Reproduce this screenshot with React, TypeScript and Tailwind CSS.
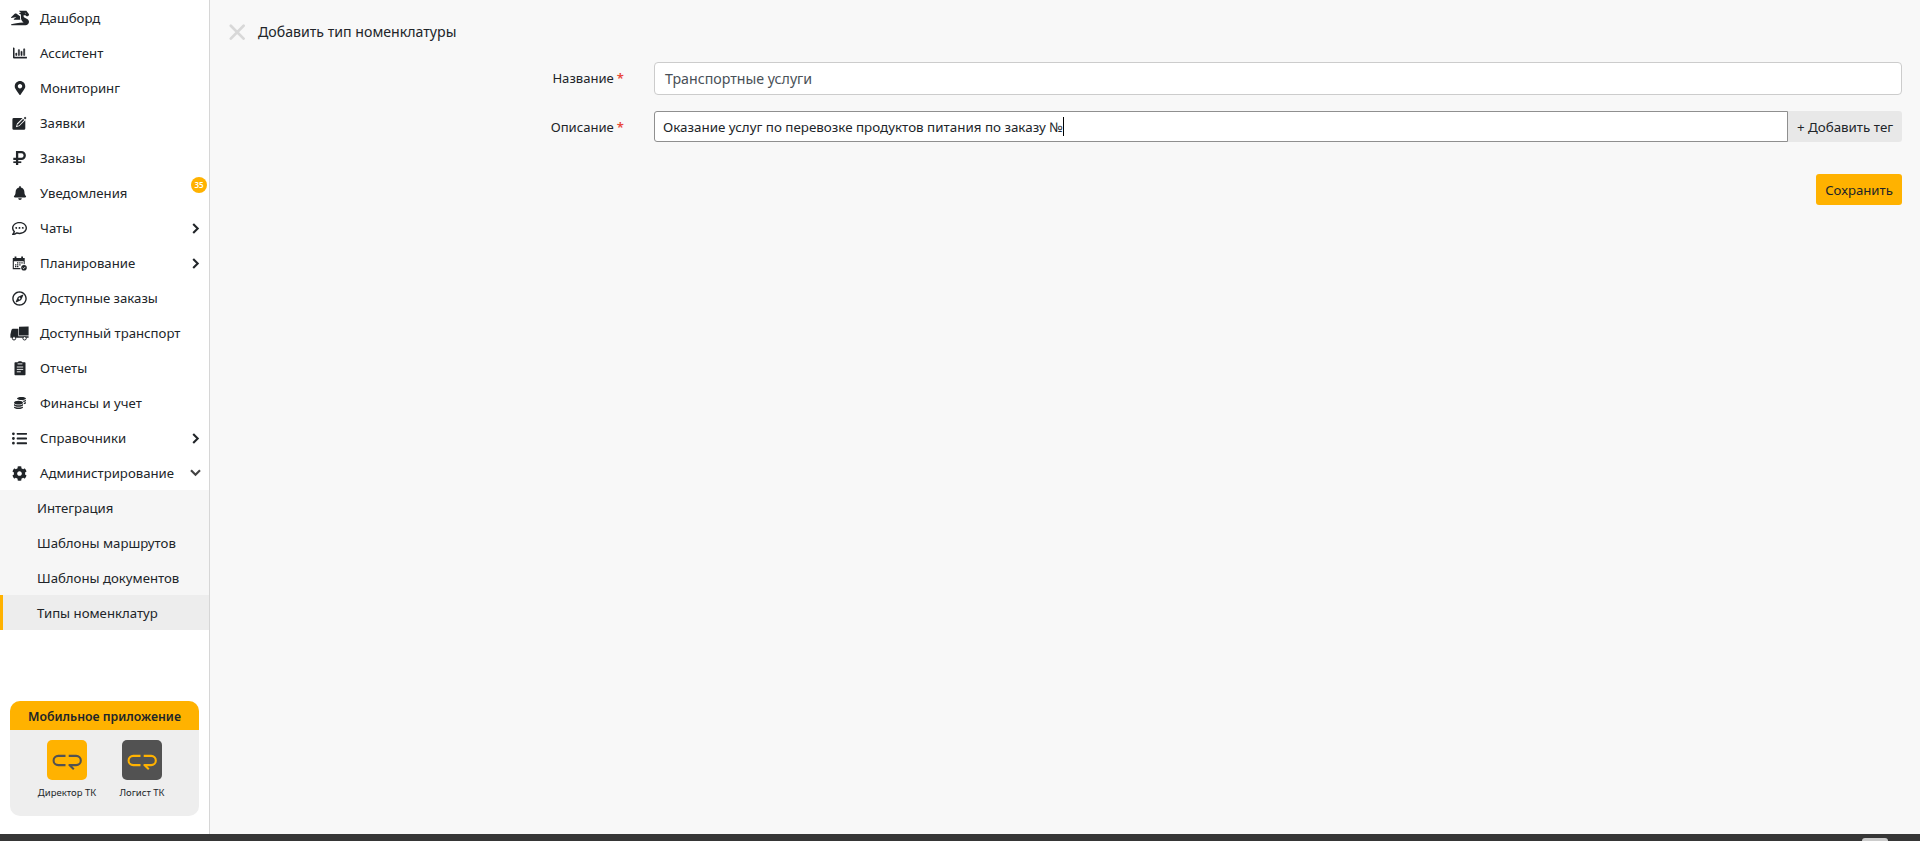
import React from 'react';
import type { ReactNode } from 'react';
import {
  FaBell,
  FaCog,
  FaCoins,
  FaDragon,
  FaListUl,
  FaMapMarkerAlt,
  FaRegChartBar,
  FaRegCommentDots,
  FaRegCompass,
} from 'react-icons/fa';

function EditIcon() {
  return (
    <svg width="15" height="15" viewBox="0 0 15 15">
      <path d="M1.8 2h8.8L5 7.6 3.9 11.2l3.6-1.1 5.8-5.8v8.1a1.4 1.4 0 0 1-1.4 1.4H1.8A1.4 1.4 0 0 1 .4 12.4v-9A1.4 1.4 0 0 1 1.8 2z" fill="currentColor" />
      <path d="m5.8 8.2 5.3-5.3 1.2 1.2L7 9.4l-1.8.6z" fill="currentColor" />
      <path d="m11.8 2.1 1.3-1.3 1.3 1.3-1.3 1.3z" fill="currentColor" />
    </svg>
  );
}

function RubleIcon() {
  return (
    <svg width="13" height="14" viewBox="0 0 13 14" fill="none" stroke="currentColor" strokeWidth="2.3">
      <path d="M4.1 14V1.2h4.3a3.3 3.3 0 0 1 0 6.7H.3" />
      <path d="M.3 11.2h8" strokeWidth="1.7" />
    </svg>
  );
}

function CalendarIcon() {
  return (
    <svg width="15" height="15" viewBox="0 0 15 15" fill="currentColor">
      <path d="M.8 2h1.8V.6h1.8V2h4.8V.6H11V2h1.7v3.2H.8z" />
      <path d="M1.3 5v7.6h7.1" fill="none" stroke="currentColor" strokeWidth="1.1" />
      <path d="M12.2 5v3.2" stroke="currentColor" strokeWidth="1" />
      <path d="M5 6.2h1.4v1.3H5zM7.2 6.2h1.4v1.3H7.2zM9.3 6.2h1.4v1.3H9.3zM3 8.2h1.4v1.2H3zM5 8.2h1.4v1.2H5zM7.2 8.2h1.4v1.2H7.2zM3 10h1.4v1.2H3zM5 10h1.4v1.2H5z" />
      <circle cx="12" cy="11.8" r="2.8" />
      <path d="m10.7 11.8.9.9 1.7-1.8" fill="none" stroke="#fff" strokeWidth=".8" />
    </svg>
  );
}

function TruckIcon() {
  return (
    <svg width="19" height="15" viewBox="0 0 19 15" fill="currentColor">
      <path d="M9 .7 18.6.4v9.1H9z" />
      <path d="M2.6 2.8h5.8v7.4h10.2v1.6H.4V8.6L1.5 3.8z" />
      <circle cx="4" cy="12.3" r="1.7" fill="#fff" stroke="currentColor" strokeWidth="1" />
      <circle cx="14.6" cy="12.3" r="1.7" fill="#fff" stroke="currentColor" strokeWidth="1" />
    </svg>
  );
}

function ReportIcon() {
  return (
    <svg width="12" height="15" viewBox="0 0 12 15">
      <path d="M1.2 1.3h2.5C4 .5 4.8.2 6 .2s2 .3 2.3 1.1h2.5c.4 0 .7.3.7.7v11.6c0 .4-.3.7-.7.7H1.2a.7.7 0 0 1-.7-.7V2c0-.4.3-.7.7-.7z" fill="currentColor" />
      <path d="M3.6 2.9h4.8M2.8 6h6.4M2.8 8.4h6.4M2.8 10.8h4" stroke="#fff" strokeWidth=".9" />
    </svg>
  );
}

function Chevron({ down }: { down?: boolean }) {
  return down ? (
    <svg width="11" height="8" viewBox="0 0 11 8" fill="none">
      <path d="m1 1.2 4.5 4.5L10 1.2" stroke="currentColor" strokeWidth="2.2" />
    </svg>
  ) : (
    <svg width="8" height="11" viewBox="0 0 8 11" fill="none">
      <path d="m1.2 1 4.5 4.5L1.2 10" stroke="currentColor" strokeWidth="2.1" />
    </svg>
  );
}

type Item = { label: string; icon: ReactNode; arrow?: 'right' | 'down'; badge?: string };

const items: Item[] = [
  { label: 'Дашборд', icon: <FaDragon size={18} /> },
  { label: 'Ассистент', icon: <FaRegChartBar size={14} stroke="currentColor" strokeWidth={14} /> },
  { label: 'Мониторинг', icon: <FaMapMarkerAlt size={14} /> },
  { label: 'Заявки', icon: <EditIcon /> },
  { label: 'Заказы', icon: <RubleIcon /> },
  { label: 'Уведомления', icon: <FaBell size={14} />, badge: '35' },
  { label: 'Чаты', icon: <FaRegCommentDots size={15} />, arrow: 'right' },
  { label: 'Планирование', icon: <CalendarIcon />, arrow: 'right' },
  { label: 'Доступные заказы', icon: <FaRegCompass size={15} /> },
  { label: 'Доступный транспорт', icon: <TruckIcon /> },
  { label: 'Отчеты', icon: <ReportIcon /> },
  { label: 'Финансы и учет', icon: <FaCoins size={12} /> },
  { label: 'Справочники', icon: <FaListUl size={15} />, arrow: 'right' },
  { label: 'Администрирование', icon: <FaCog size={15} />, arrow: 'down' },
];

const subItems = ['Интеграция', 'Шаблоны маршрутов', 'Шаблоны документов', 'Типы номенклатур'];

function AppTile({ label, dark }: { label: string; dark?: boolean }) {
  return (
    <div className="flex w-[75px] flex-col items-center">
      <div className={dark ? 'flex h-10 w-10 items-center justify-center rounded-[5px] bg-[#525252] pt-[3px] text-[#ffb200]' : 'flex h-10 w-10 items-center justify-center rounded-[5px] bg-[#ffb200] pt-[3px] text-[#525252]'}>
        <svg width="30" height="16" viewBox="0 0 30 16" fill="none" stroke="currentColor" strokeWidth="2.1" strokeLinejoin="round">
          <path d="M13.5 1.9H6.2a4.6 4.6 0 0 0 0 9.2h7.3" />
          <path d="M16.7 1.9h7.5a4.6 4.6 0 0 1 0 9.2h-6.8l4.4 4.1" />
        </svg>
      </div>
      <span className="mt-[6px] whitespace-nowrap text-[9.5px] leading-[14px]">{label}</span>
    </div>
  );
}

function Label({ text }: { text: string }) {
  return (
    <div className="w-[414px] shrink-0 text-right text-[13.1px]">
      {text}
      <span className="ml-[3px] font-semibold text-[#e8483c]">*</span>
    </div>
  );
}

export default function App() {
  return (
    <div className="flex h-[841px] w-[1920px] flex-col overflow-hidden bg-[#f8f8f8] font-['Noto_Sans',sans-serif] text-[13.2px] leading-5 text-[#212529]">
      <div className="flex h-[834px]">
        <aside className="flex w-[210px] shrink-0 flex-col border-r border-[#d6d6d6] bg-white">
          <nav>
            {items.map((item) => (
              <div key={item.label} className="relative flex h-[35px] items-center pt-px">
                <span className="flex w-[39px] shrink-0 justify-center">{item.icon}</span>
                <span className="ml-px whitespace-nowrap">{item.label}</span>
                {item.arrow && (
                  <span className={item.arrow === 'down' ? 'ml-auto mr-2 text-[#444]' : 'ml-auto mr-[9px]'}>
                    <Chevron down={item.arrow === 'down'} />
                  </span>
                )}
                {item.badge && (
                  <span className="absolute right-[2px] top-[2px] flex h-4 w-4 items-center justify-center rounded-full bg-[#ffb200] text-[8px] font-semibold leading-none text-white">
                    {item.badge}
                  </span>
                )}
              </div>
            ))}
            {subItems.map((label, i) => (
              <div
                key={label}
                className={
                  i === 3
                    ? 'flex h-[35px] items-center border-l-[3px] border-[#ffb200] bg-[#ededed] pl-[34px] pt-px'
                    : 'flex h-[35px] items-center bg-[#f6f6f6] pl-[37px] pt-px'
                }
              >
                {label}
              </div>
            ))}
          </nav>
          <div className="mx-[10px] mt-auto mb-[18px] h-[115px] overflow-hidden rounded-[10px] bg-[#eee]">
            <div className="flex h-[29px] items-center justify-center bg-[#ffb200] pt-[3px] text-[12.3px] font-semibold">
              Мобильное приложение
            </div>
            <div className="flex justify-center pt-[10px]">
              <AppTile label="Директор ТК" />
              <AppTile label="Логист ТК" dark />
            </div>
          </div>
        </aside>

        <main className="flex flex-1 flex-col pr-[18px]">
          <header className="flex h-[62px] items-center gap-[12px] pl-[19px] pt-px text-[14.15px]">
            <svg width="16" height="16" viewBox="0 0 16 16" fill="none" stroke="#d8d8d8" strokeWidth="2.7" strokeLinecap="round">
              <path d="m1.8 1.8 12.8 12.8M14.6 1.8 1.8 14.6" />
            </svg>
            <h1 className="pl-px">Добавить тип номенклатуры</h1>
          </header>
          <div className="flex h-[33px] items-center">
            <div className="pb-[2px]">
              <Label text="Название" />
            </div>
            <div className="ml-[30px] flex h-[33px] flex-1 items-center rounded-[4px] border border-[#ccc] bg-white pl-[10px] text-[14.2px] text-[#495057]">
              Транспортные услуги
            </div>
          </div>
          <div className="mt-4 flex h-[31px] items-center">
            <Label text="Описание" />
            <div className="ml-[30px] flex h-[31px] flex-1 items-center rounded-l-[3px] border border-[#8f8f8f] bg-white pl-2">
              <span className="whitespace-nowrap text-[13.39px]">Оказание услуг по перевозке продуктов питания по заказу №</span>
              <span className="h-[19px] w-px bg-black" />
            </div>
            <button className="h-[31px] w-[114px] rounded-r-[3px] bg-[#e8e8e8] text-[13.35px]">+ Добавить тег</button>
          </div>
          <button className="mt-8 h-[31px] w-[86px] self-end rounded-[3px] bg-[#ffb200]">Сохранить</button>
        </main>
      </div>
      <footer className="flex h-[7px] items-end justify-end overflow-hidden bg-[#363636] pr-8">
        <div className="h-[3px] w-[26px] rounded-t-[6px] bg-[#ccc]" />
      </footer>
    </div>
  );
}
